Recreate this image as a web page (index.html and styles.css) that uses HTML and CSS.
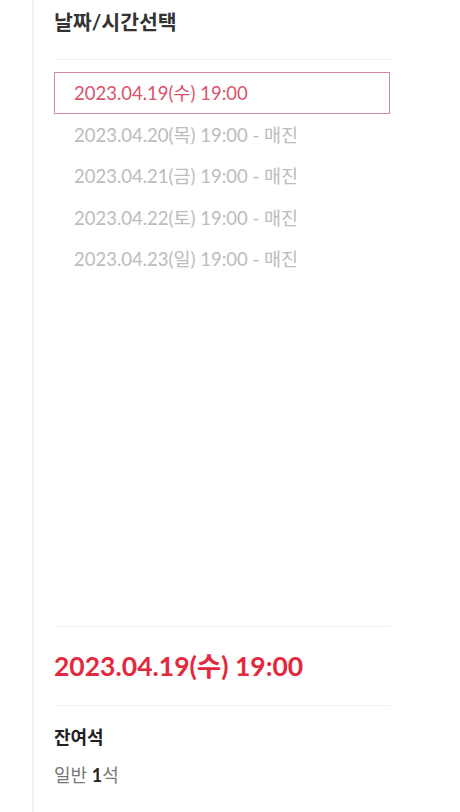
FILE: index.html
```html
<!DOCTYPE html>
<html lang="ko">
<head>
    <meta charset="utf-8">
    <title>날짜/시간선택</title>
    <link rel="stylesheet" href="styles.css">
</head>
<body>
    <div class="panel">
        <h2 class="panel-title">날짜/시간선택</h2>

        <ul class="date-list">
            <li class="date-item active">2023.04.19(수) 19:00</li>
            <li class="date-item soldout">2023.04.20(목) 19:00 - 매진</li>
            <li class="date-item soldout">2023.04.21(금) 19:00 - 매진</li>
            <li class="date-item soldout">2023.04.22(토) 19:00 - 매진</li>
            <li class="date-item soldout">2023.04.23(일) 19:00 - 매진</li>
        </ul>

        <div class="summary">
            <div class="selected-date">2023.04.19(수) 19:00</div>
            <div class="seats">
                <h3 class="seats-title">잔여석</h3>
                <p class="seats-info">일반 <strong>1</strong>석</p>
            </div>
        </div>
    </div>
</body>
</html>
```

FILE: styles.css
```css
body {
    font-family: Lato, "Noto Sans CJK KR", sans-serif;
    margin: 0;
    padding: 0;
    background-color: #ffffff;
    color: #222;
}

.panel {
    box-sizing: border-box;
    width: 378px;
    height: 812px;
    margin-left: 32px;
    padding: 0 20px;
    border-left: 2px solid #f1f1f1;
    display: flex;
    flex-direction: column;
}

.panel-title {
    margin: 0;
    padding: 7px 0 22px;
    font-size: 20.5px;
    line-height: 30px;
    font-weight: bold;
    color: #333;
    border-bottom: 1px solid #f0f0f0;
}

.date-list {
    list-style: none;
    margin: 12px 0 0;
    padding: 0;
}

.date-item {
    box-sizing: border-box;
    height: 41.5px;
    padding: 0 19px;
    font-size: 18.5px;
    line-height: 40px;
    border: 1px solid transparent;
}

.date-item.active {
    color: #d9546b;
    border-color: #d48a98;
}

.date-item.soldout {
    color: #bcbcbc;
}

.summary {
    margin-top: auto;
    padding-bottom: 24px;
}

.selected-date {
    padding: 22px 0;
    font-size: 26.5px;
    line-height: 34px;
    font-weight: bold;
    color: #e4283e;
    border-top: 1px solid #f0f0f0;
    border-bottom: 1px solid #f0f0f0;
}

.seats {
    padding-top: 18px;
}

.seats-title {
    margin: 0;
    font-size: 18px;
    line-height: 26px;
    font-weight: bold;
    color: #222;
}

.seats-info {
    margin: 12px 0 0;
    font-size: 18px;
    line-height: 26px;
    color: #777;
}

.seats-info strong {
    color: #222;
}
```
